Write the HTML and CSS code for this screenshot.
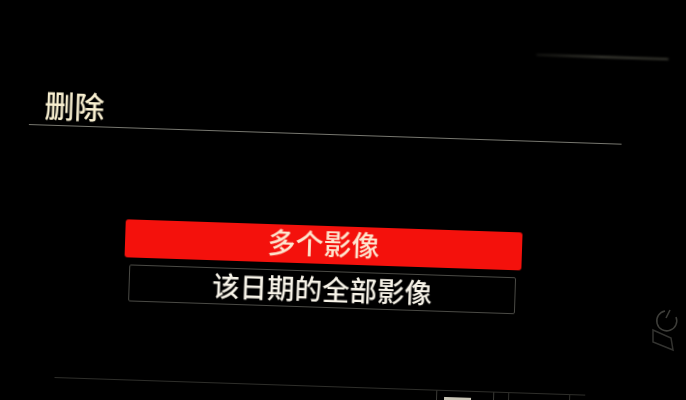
FILE: index.html
```html
<!DOCTYPE html>
<html lang="zh-CN">
<head>
<meta charset="utf-8">
<title>删除</title>
<link rel="stylesheet" href="styles.css">
</head>
<body>
<main class="screen">
  <div class="smudge"></div>
  <h1 class="title">删除</h1>
  <div class="rule"></div>
  <ul class="menu">
    <li class="item item-active">多个影像</li>
    <li class="item item-plain">该日期的全部影像</li>
  </ul>
  <div class="status">
    <span class="cell cell-wide"></span>
    <span class="cell cell-icon"><span class="chip"></span></span>
    <span class="cell cell-gap"></span>
    <span class="cell cell-last"></span>
  </div>
</main>
<svg class="side-icon" viewBox="0 0 36 46" width="36" height="46" aria-hidden="true">
  <g fill="none" stroke="#3e3e3a" stroke-width="1.5">
    <path d="M17 3a10 10 0 1 0 11 6"/>
    <path d="M22 2l-4 8"/>
    <path d="M5 22l18 8 2 12-20-8z" stroke="#333330"/>
  </g>
</svg>
</body>
</html>
```
FILE: styles.css
```css
html, body {
  margin: 0;
  width: 686px;
  height: 400px;
  overflow: hidden;
  background: #000;
}
body {
  position: relative;
  font-family: "Noto Sans CJK SC", "Noto Sans", sans-serif;
}
.screen {
  box-sizing: border-box;
  width: 686px;
  height: 377px;
  display: flex;
  flex-direction: column;
  transform: rotate(1.9deg);
  transform-origin: 0 0;
  filter: blur(0.45px);
}
.screen > * {
  flex: none;
}
.smudge {
  align-self: flex-end;
  width: 132px;
  height: 2px;
  margin: 36px 16px 0 0;
  background: linear-gradient(90deg, #141411, #45453c 50%, #3a3a32);
  filter: blur(0.8px);
}
.title {
  margin: 45px 0 0 48px;
  font-size: 30px;
  line-height: 38px;
  font-weight: 500;
  color: #f8efd0;
}
.rule {
  width: 593px;
  height: 1px;
  margin: 2px 0 0 33px;
  background: #77776f;
}
.menu {
  list-style: none;
  margin: 91px 0 0 133px;
  padding: 0;
  width: 397px;
  display: flex;
  flex-direction: column;
  align-items: center;
  gap: 7px;
}
.item {
  box-sizing: border-box;
  flex: none;
  text-align: center;
  white-space: nowrap;
  font-weight: 500;
}
.item-active {
  width: 397px;
  height: 38px;
  background: #f4110c;
  border-radius: 3px;
  color: #fde6cf;
  font-size: 28px;
  line-height: 34px;
}
.item-plain {
  width: 387px;
  height: 37px;
  border: 1px solid #4a4a45;
  border-radius: 2px;
  color: #f7f3e8;
  font-size: 27.5px;
  line-height: 32px;
}
.status {
  display: flex;
  height: 12px;
  width: 531px;
  margin: 78px 0 0 67px;
  border-top: 1px solid #2e2e2a;
}
.cell {
  display: block;
  box-sizing: border-box;
}
.cell-wide { width: 382px; }
.cell-icon {
  width: 58px;
  border-left: 1px solid #3a3a36;
  border-right: 1px solid #3a3a36;
  padding: 6px 0 0 7px;
}
.chip {
  display: block;
  width: 27px;
  height: 8px;
  background: #c9c5b6;
  filter: blur(0.6px);
}
.cell-gap { width: 14px; }
.cell-last {
  width: 62px;
  border-left: 1px solid #2e2e2a;
  border-right: 1px solid #2e2e2a;
}
.side-icon {
  position: absolute;
  left: 648px;
  top: 308px;
  filter: blur(0.7px);
}
```
